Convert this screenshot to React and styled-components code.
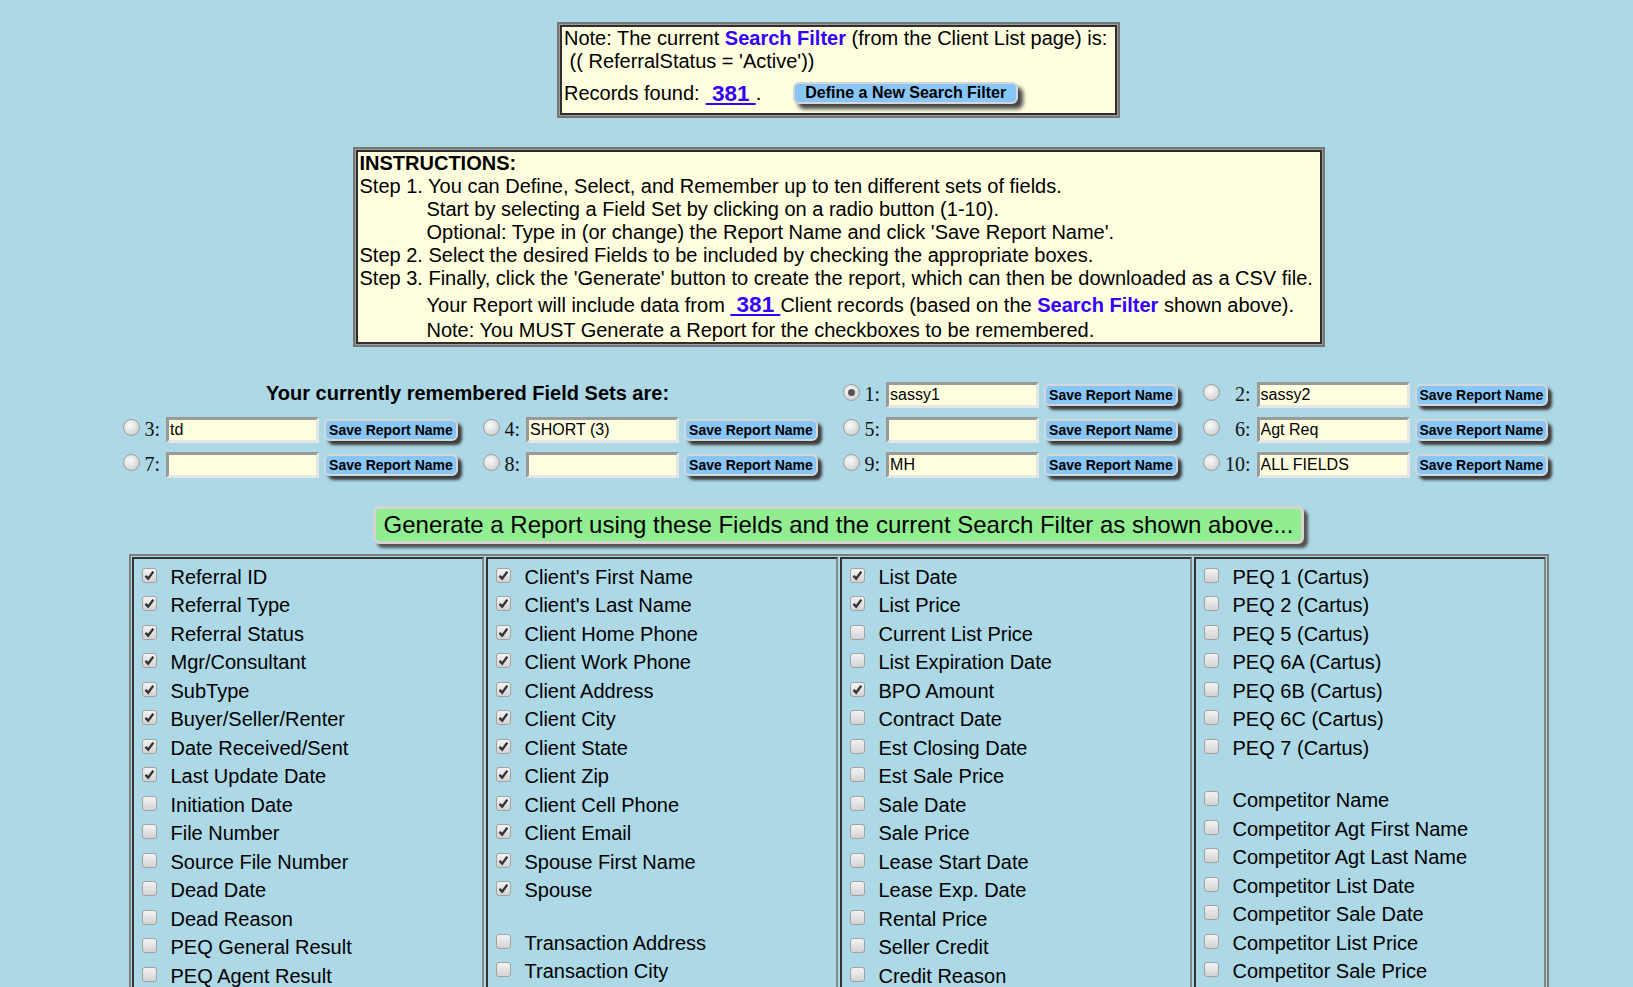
import React from "react";
import styled, { createGlobalStyle } from "styled-components";

const GlobalStyle = createGlobalStyle`
  body {
    margin: 0;
    background: #add8e6;
    font-family: "Liberation Sans", Arial, sans-serif;
    color: #000;
  }
`;

// whole page is centred a bit right of the window centre, like the original
const Page = styled.div`
  display: flex;
  flex-direction: column;
  align-items: center;
  padding: 22px 0 40px 44px;
`;

/* table border=2 look: grey outer frame, dark inner cell border */
const Frame = styled.div`
  width: ${(p) => p.$w}px;
  box-sizing: border-box;
  border: 2px solid #767676;
  padding: 1px;
  background: #9c9c9c;
  margin-bottom: ${(p) => p.$mb || 0}px;
`;

const Cell = styled.div`
  background: #ffffe0;
  border: 2px solid #2e2e2e;
  padding: 0 2px;
  font-size: 20px;
  line-height: 23px;
  white-space: nowrap;
`;

const Line = styled.div`
  padding-left: ${(p) => p.$indent || 0}px;
  height: ${(p) => p.$h || 23}px;
  line-height: ${(p) => p.$h || 23}px;
`;

const Hl = styled.span`
  font-weight: bold;
  color: #3300ff;
`;

const Count = styled.span`
  font-weight: bold;
  font-size: 22.5px;
  color: #3300ff;
  text-decoration: underline;
  margin-left: ${(p) => p.$ml || 0}px;
`;

const RecordsRow = styled.div`
  display: flex;
  align-items: center;
  height: 40px;
`;

const BlueButton = styled.button`
  margin-left: 32px;
  height: 22px;
  padding: 0 10px;
  border: 2px solid #d6d6d6;
  border-radius: 6px;
  background: #88c6f7;
  box-shadow: 5px 5px 4px #444;
  font-family: "Liberation Sans", Arial, sans-serif;
  font-size: 16px;
  font-weight: bold;
  line-height: 18px;
  color: #000;
  cursor: pointer;
`;

const FieldSets = styled.div`
  display: grid;
  grid-template-columns: repeat(4, 360px);
  grid-auto-rows: 35px;
  align-items: center;
  margin-bottom: 24px;
`;

const SetsTitle = styled.div`
  grid-column: span 2;
  text-align: center;
  font-size: 20px;
  font-weight: bold;
  padding-right: 22px;
  margin-top: -3px;
`;

const SetCell = styled.div`
  display: flex;
  align-items: center;
`;

const Radio = styled.input.attrs({ type: "radio", name: "fieldset" })`
  appearance: none;
  position: relative;
  width: 17px;
  height: 17px;
  margin: 0 0 0 4px;
  border: 1px solid #9c9c9c;
  border-radius: 50%;
  background: radial-gradient(circle at 40% 35%, #fafafa 0%, #dedede 55%, #bcbcbc 100%);
  box-sizing: border-box;
  transform: translateY(-2px);

  &:checked::after {
    content: "";
    position: absolute;
    left: 4px;
    top: 4px;
    width: 7px;
    height: 7px;
    border-radius: 50%;
    background: #555;
  }
`;

const SetLabel = styled.span`
  font-family: "Liberation Serif", "Times New Roman", serif;
  font-size: 20px;
  color: #111;
  min-width: ${(p) => p.$w || 0}px;
  text-align: right;
  margin: 0 6px 0 5px;
`;

const NameInput = styled.input`
  width: 153px;
  height: 26px;
  box-sizing: border-box;
  border: 3px solid;
  border-color: #9a9a9a #e6e6e6 #e6e6e6 #9a9a9a;
  padding: 0 0 0 1px;
  background: #ffffe0;
  font-family: "Liberation Sans", Arial, sans-serif;
  font-size: 16px;
  color: #000;
  outline: none;
`;

const SaveButton = styled.button`
  margin-left: 5px;
  height: 22px;
  padding: 0 3px;
  border: 2px solid #d6d6d6;
  border-radius: 6px;
  background: #88c6f7;
  box-shadow: 4px 4px 3px #3c3c3c;
  font-family: "Liberation Sans", Arial, sans-serif;
  font-size: 14px;
  font-weight: bold;
  line-height: 16px;
  color: #000;
  white-space: nowrap;
  cursor: pointer;
`;

const GenerateButton = styled.button`
  padding: 2px 8px;
  border: 3px solid #d4d4d4;
  border-radius: 6px;
  background: #90ee90;
  box-shadow: 4px 4px 3px #555;
  font-family: "Liberation Sans", Arial, sans-serif;
  font-size: 24px;
  line-height: 28px;
  color: #000;
  white-space: nowrap;
  margin-bottom: 10px;
  cursor: pointer;
`;

const FieldsTable = styled.div`
  width: 1420px;
  box-sizing: border-box;
  display: grid;
  grid-template-columns: repeat(4, 1fr);
  gap: 2px;
  border: 2px solid #7c7c7c;
  padding: 1px;
`;

const FieldColumn = styled.div`
  border: 2px solid;
  border-color: #333 #858585 #858585 #333;
  padding: 4px 4px 0 8px;
`;

const FieldRow = styled.label`
  display: flex;
  align-items: center;
  height: 28.5px;
  font-size: 20px;
  white-space: nowrap;
`;

const Check = styled.span`
  flex: none;
  width: 15px;
  height: 15px;
  box-sizing: border-box;
  border: 1px solid #a2a2a2;
  border-radius: 3px;
  background: linear-gradient(#f3f3f3, #d3d3d3);
  margin-right: 14px;
  transform: translateY(-2px);
  display: flex;
  align-items: center;
  justify-content: center;
`;

const Spacer = styled.div`
  height: 24px;
`;

const CheckMark = () => (
  <svg width="13" height="13" viewBox="0 0 13 13">
    <path d="M2.5 6.8 L5.2 9.6 L10.3 2.6" fill="none" stroke="#333" strokeWidth="2.4" />
  </svg>
);

const columns = [
  [
    ["Referral ID", 1], ["Referral Type", 1], ["Referral Status", 1], ["Mgr/Consultant", 1],
    ["SubType", 1], ["Buyer/Seller/Renter", 1], ["Date Received/Sent", 1], ["Last Update Date", 1],
    ["Initiation Date"], ["File Number"], ["Source File Number"], ["Dead Date"], ["Dead Reason"],
    ["PEQ General Result"], ["PEQ Agent Result"], ["PEQ Comments"], ["Referral Fee"],
  ],
  [
    ["Client's First Name", 1], ["Client's Last Name", 1], ["Client Home Phone", 1],
    ["Client Work Phone", 1], ["Client Address", 1], ["Client City", 1], ["Client State", 1],
    ["Client Zip", 1], ["Client Cell Phone", 1], ["Client Email", 1], ["Spouse First Name", 1],
    ["Spouse", 1], null, ["Transaction Address"], ["Transaction City"], ["Transaction State"],
    ["Transaction Zip"],
  ],
  [
    ["List Date", 1], ["List Price", 1], ["Current List Price"], ["List Expiration Date"],
    ["BPO Amount", 1], ["Contract Date"], ["Est Closing Date"], ["Est Sale Price"], ["Sale Date"],
    ["Sale Price"], ["Lease Start Date"], ["Lease Exp. Date"], ["Rental Price"], ["Seller Credit"],
    ["Credit Reason"], ["Closing Date"], ["Commission"],
  ],
  [
    ["PEQ 1 (Cartus)"], ["PEQ 2 (Cartus)"], ["PEQ 5 (Cartus)"], ["PEQ 6A (Cartus)"],
    ["PEQ 6B (Cartus)"], ["PEQ 6C (Cartus)"], ["PEQ 7 (Cartus)"], null, ["Competitor Name"],
    ["Competitor Agt First Name"], ["Competitor Agt Last Name"], ["Competitor List Date"],
    ["Competitor Sale Date"], ["Competitor List Price"], ["Competitor Sale Price"],
    ["Competitor Company"], ["Competitor Phone"],
  ],
];

// field sets laid out in table order (3..10 after the title row)
const sets = [
  { n: 1, name: "sassy1", checked: true },
  { n: 2, name: "sassy2" },
  { n: 3, name: "td" },
  { n: 4, name: "SHORT (3)" },
  { n: 5, name: "" },
  { n: 6, name: "Agt Req" },
  { n: 7, name: "" },
  { n: 8, name: "" },
  { n: 9, name: "MH" },
  { n: 10, name: "ALL FIELDS" },
];

const FieldSet = ({ set, col }) => (
  <SetCell>
    <Radio defaultChecked={!!set.checked} />
    <SetLabel $w={col === 4 ? 26 : 0}>{col === 4 && set.n < 10 ? "\u00a0" : ""}{set.n}:</SetLabel>
    <NameInput defaultValue={set.name} />
    <SaveButton>Save Report Name</SaveButton>
  </SetCell>
);

export default function App() {
  return (
    <>
      <GlobalStyle />
      <Page>
        <Frame $w={563} $mb={29}>
          <Cell>
            <Line>
              Note: The current <Hl>Search Filter</Hl> (from the Client List page) is:
            </Line>
            <Line>{"\u00a0(( ReferralStatus = 'Active'))"}</Line>
            <RecordsRow>
              Records found:
              <Count $ml={6}>{"\u00a0381\u00a0"}</Count>.
              <BlueButton>Define a New Search Filter</BlueButton>
            </RecordsRow>
          </Cell>
        </Frame>

        <Frame $w={972} $mb={30}>
          <Cell>
            <Line><b>INSTRUCTIONS:</b></Line>
            <Line>Step 1. You can Define, Select, and Remember up to ten different sets of fields.</Line>
            <Line $indent={67}>Start by selecting a Field Set by clicking on a radio button (1-10).</Line>
            <Line $indent={67}>Optional: Type in (or change) the Report Name and click 'Save Report Name'.</Line>
            <Line>Step 2. Select the desired Fields to be included by checking the appropriate boxes.</Line>
            <Line>Step 3. Finally, click the 'Generate' button to create the report, which can then be downloaded as a CSV file.</Line>
            <Line $indent={67} $h={29}>
              Your Report will include data from <Count>{"\u00a0381\u00a0"}</Count>Client records (based on
              the <Hl>Search Filter</Hl> shown above).
            </Line>
            <Line $indent={67}>Note: You MUST Generate a Report for the checkboxes to be remembered.</Line>
          </Cell>
        </Frame>

        <FieldSets>
          <SetsTitle>Your currently remembered Field Sets are:</SetsTitle>
          {sets.map((s, i) => (
            <FieldSet key={s.n} set={s} col={i < 2 ? i + 3 : ((i - 2) % 4) + 1} />
          ))}
        </FieldSets>

        <GenerateButton>
          Generate a Report using these Fields and the current Search Filter as shown above...
        </GenerateButton>

        <FieldsTable>
          {columns.map((col, ci) => (
            <FieldColumn key={ci}>
              {col.map((f, fi) =>
                f ? (
                  <FieldRow key={fi}>
                    <Check>{f[1] ? <CheckMark /> : null}</Check>
                    {f[0]}
                  </FieldRow>
                ) : (
                  <Spacer key={fi} />
                )
              )}
            </FieldColumn>
          ))}
        </FieldsTable>
      </Page>
    </>
  );
}
